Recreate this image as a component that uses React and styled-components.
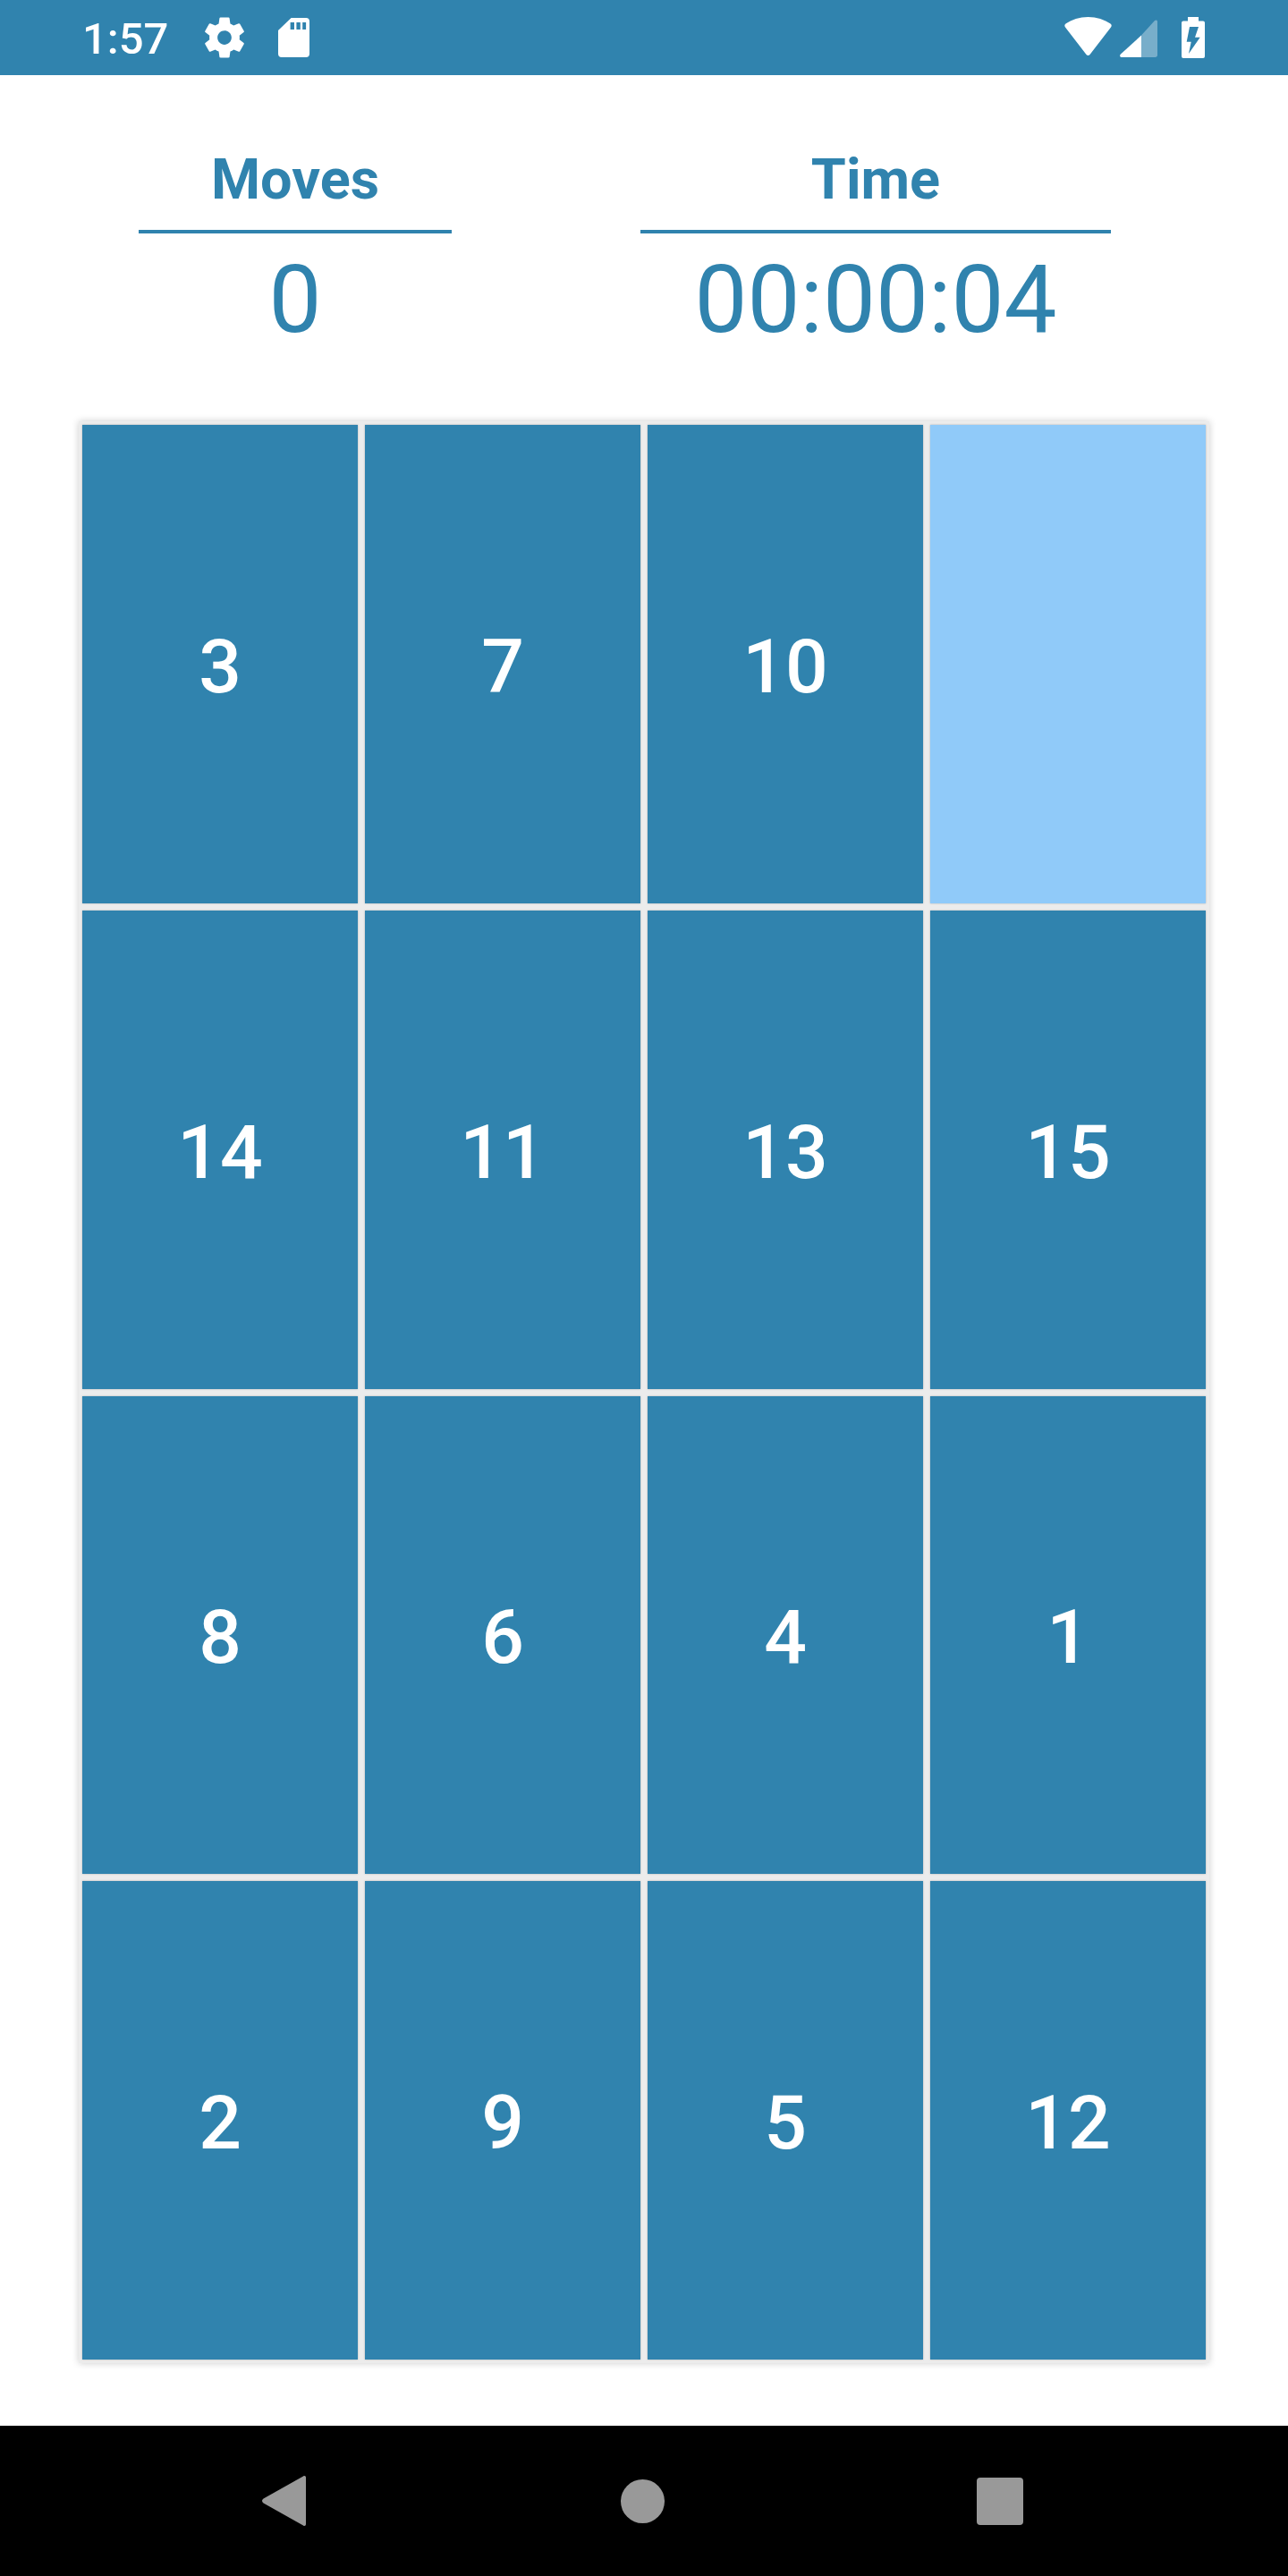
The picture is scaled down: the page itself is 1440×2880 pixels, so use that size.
import styled, { createGlobalStyle } from 'styled-components';

const GlobalStyle = createGlobalStyle`
  html, body {
    margin: 0;
    padding: 0;
    background: #fff;
  }
`;

const TILES = [3, 7, 10, null, 14, 11, 13, 15, 8, 6, 4, 1, 2, 9, 5, 12];

function App() {
  return (
    <Screen>
      <GlobalStyle />
      <StatusBar>
        <Clock>1:57</Clock>
        <GearIcon viewBox="0 0 24 24">
          <path d="M19.43 12.98c.04-.32.07-.64.07-.98s-.03-.66-.07-.98l2.11-1.65c.19-.15.24-.42.12-.64l-2-3.46c-.12-.22-.39-.3-.61-.22l-2.49 1c-.52-.4-1.08-.73-1.69-.98l-.38-2.65C14.46 2.18 14.25 2 14 2h-4c-.25 0-.46.18-.49.42l-.38 2.65c-.61.25-1.17.59-1.69.98l-2.49-1c-.23-.09-.49 0-.61.22l-2 3.46c-.13.22-.07.49.12.64l2.11 1.65c-.04.32-.07.65-.07.98s.03.66.07.98l-2.11 1.65c-.19.15-.24.42-.12.64l2 3.46c.12.22.39.3.61.22l2.49-1c.52.4 1.08.73 1.69.98l.38 2.65c.03.24.24.42.49.42h4c.25 0 .46-.18.49-.42l.38-2.65c.61-.25 1.17-.59 1.69-.98l2.49 1c.23.09.49 0 .61-.22l2-3.46c.12-.22.07-.49-.12-.64l-2.11-1.65zM12 15.5c-1.93 0-3.5-1.57-3.5-3.5s1.57-3.5 3.5-3.5 3.5 1.57 3.5 3.5-1.57 3.5-3.5 3.5z" />
        </GearIcon>
        <SdIcon viewBox="0 0 36 44" preserveAspectRatio="none">
          <path
            fillRule="evenodd"
            d="M15 0H32a4 4 0 0 1 4 4V40a4 4 0 0 1-4 4H4a4 4 0 0 1-4-4V14ZM14 5V13H18.500V5ZM21 5V13H25.500V5ZM28 5V13H32V5Z"
          />
        </SdIcon>
        <Spacer />
        <WifiIcon viewBox="0 0 53 43">
          <path d="M1.500 7.500C8 3 17 0 26.500 0S45 3 51.500 7.500C53 8.500 53 10 52 11.500L28.500 42C27.500 43.300 25.500 43.300 24.500 42L1 11.500C0 10 0 8.500 1.500 7.500Z" />
        </WifiIcon>
        <SignalIcon viewBox="0 0 42 42">
          <path d="M24 17.500V42H2C0.300 42-.5 40 .7 38.800Z" />
          <path opacity="0.35" d="M24 17.500L39 1C40.200-.2 42 .5 42 2V39.500C42 41 41 42 39.500 42H24Z" />
        </SignalIcon>
        <BatteryIcon viewBox="0 0 26 46">
          <path
            fillRule="evenodd"
            d="M7 0H19V4.500H24A2 2 0 0 1 26 6.500V44A2 2 0 0 1 24 46H2A2 2 0 0 1 0 44V6.500A2 2 0 0 1 2 4.500H7ZM9 11L5.700 27.700H10.700L8 41L20.700 22.700H15L19 11Z"
          />
        </BatteryIcon>
      </StatusBar>

      <Main>
        <Stats>
          <Stat $width={350}>
            <StatLabel>Moves</StatLabel>
            <StatValue>0</StatValue>
          </Stat>
          <Stat $width={526}>
            <StatLabel>Time</StatLabel>
            <StatValue>00:00:04</StatValue>
          </Stat>
        </Stats>

        <Board>
          {TILES.map((n, i) => (
            <Tile key={i} $empty={n === null}>
              {n}
            </Tile>
          ))}
        </Board>
      </Main>

      <NavBar>
        <NavIcon $width={49} $height={56} viewBox="0 0 49 56">
          <path d="M46 .6C47.500-.5 49 .3 49 2V54C49 55.700 47.500 56.500 46 55.400L1.500 30.500C-.5 29-.5 27 1.500 25.500Z" />
        </NavIcon>
        <HomeDot />
        <RecentSquare />
      </NavBar>
    </Screen>
  );
}

const Screen = styled.div`
  display: flex;
  flex-direction: column;
  width: 1440px;
  height: 2880px;
  background: #fff;
  overflow: hidden;
  font-family: Roboto, 'Liberation Sans', sans-serif;
`;

const StatusBar = styled.header`
  display: flex;
  align-items: flex-start;
  height: 84px;
  padding: 0 93px 0 92px;
  box-sizing: border-box;
  background: #3083ae;
  fill: #fff;
`;

const Clock = styled.span`
  width: 134px;
  margin-top: 16px;
  font-size: 49px;
  line-height: 56px;
  font-weight: 500;
  color: #fff;
`;

const GearIcon = styled.svg`
  width: 54px;
  height: 54px;
  margin: 15px 0 0 -2px;
`;

const SdIcon = styled.svg`
  width: 35px;
  height: 44px;
  margin: 20px 0 0 33px;
`;

const Spacer = styled.div`
  flex: 1;
`;

const WifiIcon = styled.svg`
  width: 53px;
  height: 43px;
  margin-top: 19px;
`;

const SignalIcon = styled.svg`
  width: 42px;
  height: 42px;
  margin: 22px 0 0 9px;
`;

const BatteryIcon = styled.svg`
  width: 26px;
  height: 46px;
  margin: 19px 0 0 27px;
`;

const Main = styled.main`
  flex: 1;
  display: flex;
  flex-direction: column;
  padding: 0 88px;
`;

const Stats = styled.section`
  display: flex;
  gap: 211px;
  height: 387px;
  padding: 80px 0 0 67px;
  box-sizing: border-box;
`;

const Stat = styled.div`
  width: ${(p) => p.$width}px;
  text-align: center;
  color: #3083ae;
`;

const StatLabel = styled.div`
  height: 93px;
  border-bottom: 4px solid #3083ae;
  font-size: 63px;
  line-height: 74px;
  font-weight: 700;
`;

const StatValue = styled.div`
  padding-top: 15px;
  font-size: 105px;
  line-height: 120px;
  font-weight: 400;
`;

const Board = styled.section`
  display: grid;
  grid-template-columns: repeat(4, 308px);
  grid-template-rows: repeat(4, 534.75px);
  gap: 8px;
  padding: 4px;
  background: #ececec;
  box-shadow: 0 0 8px rgba(0, 0, 0, 0.2);
`;

const Tile = styled.div`
  display: flex;
  align-items: center;
  justify-content: center;
  padding-top: 6px;
  box-sizing: border-box;
  background: ${(p) => (p.$empty ? '#90caf9' : '#3083ae')};
  box-shadow: 0 0 2px rgba(0, 0, 0, 0.25);
  color: #fff;
  font-size: 84px;
  font-weight: 500;
`;

const NavBar = styled.nav`
  display: flex;
  align-items: center;
  height: 168px;
  padding: 0 296px 0 293px;
  box-sizing: border-box;
  justify-content: space-between;
  background: #000;
`;

const NavIcon = styled.svg`
  width: ${(p) => p.$width}px;
  height: ${(p) => p.$height}px;
  fill: #999;
`;

const HomeDot = styled.div`
  width: 49px;
  height: 49px;
  margin-left: 3px;
  border-radius: 50%;
  background: #999;
`;

const RecentSquare = styled.div`
  width: 52px;
  height: 53px;
  border-radius: 4px;
  background: #999;
`;

export default App;
